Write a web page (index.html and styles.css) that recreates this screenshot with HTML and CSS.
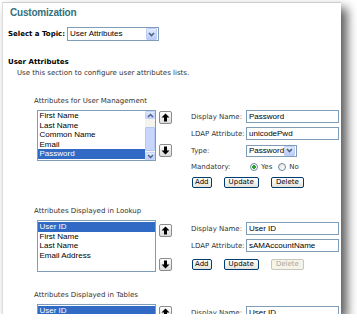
FILE: index.html
```html
<!DOCTYPE html>
<html lang="en">
<head>
  <meta charset="UTF-8">
  <meta name="viewport" content="width=device-width, initial-scale=1.0">
  <title>Customization</title>
  <link rel="stylesheet" href="styles.css">
</head>
<body>
  <div class="window">
    <h1 class="page-title">Customization</h1>

    <!-- Topic picker -->
    <div class="topic-row">
      <span class="topic-label">Select a Topic:</span>
      <div class="dropdown dropdown-topic">
        <span class="dropdown-text">User Attributes</span>
        <span class="dropdown-arrow"><svg width="7" height="5" viewBox="0 0 7 5"><polyline points="1,1 3.5,3.5 6,1" fill="none" stroke="#4d6185" stroke-width="1.6"/></svg></span>
      </div>
    </div>

    <h2 class="section-title">User Attributes</h2>
    <p class="section-desc">Use this section to configure user attributes lists.</p>

    <!-- User Management -->
    <div class="group group-manage">
      <div class="group-label">Attributes for User Management</div>
      <div class="group-body">
        <div class="listbox listbox-scroll">
          <ul class="list-items">
            <li>First Name</li>
            <li>Last Name</li>
            <li>Common Name</li>
            <li>Email</li>
            <li class="selected">Password</li>
          </ul>
          <div class="scrollbar">
            <span class="scroll-btn"><svg width="7" height="5" viewBox="0 0 7 5"><polyline points="1,4 3.5,1.5 6,4" fill="none" stroke="#4d6185" stroke-width="1.4"/></svg></span>
            <span class="scroll-track"><span class="scroll-thumb"></span></span>
            <span class="scroll-btn"><svg width="7" height="5" viewBox="0 0 7 5"><polyline points="1,1 3.5,3.5 6,1" fill="none" stroke="#4d6185" stroke-width="1.4"/></svg></span>
          </div>
        </div>
        <div class="movers">
          <button class="move-btn"><svg width="9" height="9" viewBox="0 0 9 9"><path d="M4.5 0.5 L8.5 4.5 H6 V8.5 H3 V4.5 H0.5 Z" fill="#000"/></svg></button>
          <button class="move-btn"><svg width="9" height="9" viewBox="0 0 9 9"><path d="M4.5 8.5 L8.5 4.5 H6 V0.5 H3 V4.5 H0.5 Z" fill="#000"/></svg></button>
        </div>
        <div class="attr-form">
          <div class="form-row">
            <span class="form-label">Display Name:</span>
            <input class="text-input" type="text" value="Password">
          </div>
          <div class="form-row">
            <span class="form-label">LDAP Attribute:</span>
            <input class="text-input" type="text" value="unicodePwd">
          </div>
          <div class="form-row">
            <span class="form-label">Type:</span>
            <div class="dropdown dropdown-type">
              <span class="dropdown-text">Password</span>
              <span class="dropdown-arrow"><svg width="7" height="5" viewBox="0 0 7 5"><polyline points="1,1 3.5,3.5 6,1" fill="none" stroke="#4d6185" stroke-width="1.6"/></svg></span>
            </div>
          </div>
          <div class="form-row">
            <span class="form-label">Mandatory:</span>
            <span class="radio radio-checked"></span><span class="radio-text">Yes</span>
            <span class="radio"></span><span class="radio-text">No</span>
          </div>
          <div class="form-buttons">
            <button class="btn btn-add">Add</button>
            <button class="btn">Update</button>
            <button class="btn">Delete</button>
          </div>
        </div>
      </div>
    </div>

    <!-- Lookup -->
    <div class="group group-lookup">
      <div class="group-label">Attributes Displayed in Lookup</div>
      <div class="group-body">
        <div class="listbox">
          <ul class="list-items">
            <li class="selected">User ID</li>
            <li>First Name</li>
            <li>Last Name</li>
            <li>Email Address</li>
          </ul>
        </div>
        <div class="movers">
          <button class="move-btn"><svg width="9" height="9" viewBox="0 0 9 9"><path d="M4.5 0.5 L8.5 4.5 H6 V8.5 H3 V4.5 H0.5 Z" fill="#000"/></svg></button>
          <button class="move-btn"><svg width="9" height="9" viewBox="0 0 9 9"><path d="M4.5 8.5 L8.5 4.5 H6 V0.5 H3 V4.5 H0.5 Z" fill="#000"/></svg></button>
        </div>
        <div class="attr-form">
          <div class="form-row">
            <span class="form-label">Display Name:</span>
            <input class="text-input" type="text" value="User ID">
          </div>
          <div class="form-row">
            <span class="form-label">LDAP Attribute:</span>
            <input class="text-input" type="text" value="sAMAccountName">
          </div>
          <div class="form-buttons">
            <button class="btn btn-add">Add</button>
            <button class="btn">Update</button>
            <button class="btn" disabled>Delete</button>
          </div>
        </div>
      </div>
    </div>

    <!-- Tables -->
    <div class="group group-tables">
      <div class="group-label">Attributes Displayed in Tables</div>
      <div class="group-body">
        <div class="listbox">
          <ul class="list-items">
            <li class="selected">User ID</li>
          </ul>
        </div>
        <div class="movers">
          <button class="move-btn"><svg width="9" height="9" viewBox="0 0 9 9"><path d="M4.5 0.5 L8.5 4.5 H6 V8.5 H3 V4.5 H0.5 Z" fill="#000"/></svg></button>
        </div>
        <div class="attr-form">
          <div class="form-row">
            <span class="form-label">Display Name:</span>
            <input class="text-input" type="text" value="User ID">
          </div>
        </div>
      </div>
    </div>
  </div>
</body>
</html>
```

FILE: styles.css
```css
/* General Styles */
body {
  margin: 0;
  background: #fff;
  font-family: "DejaVu Sans", Verdana, sans-serif;
  font-size: 7px;
  color: #333;
}

/* Window */
.window {
  margin: 2px 0 0 2px;
  width: 339px;
  height: 312px;
  box-sizing: border-box;
  padding-left: 5px;
  border-top: 1px solid #cfcfcf;
  border-left: 1px solid #dcdcdc;
  background: #fff;
  overflow: hidden;
  box-shadow: 6px 6px 10px rgba(0, 0, 0, 0.65);
}

.page-title {
  margin: 3px 0 0 2px;
  font-family: "Liberation Sans", Arial, sans-serif;
  font-size: 10px;
  font-weight: bold;
  line-height: 14px;
  letter-spacing: -0.2px;
  color: #33707c;
}

/* Topic */
.topic-row {
  display: flex;
  align-items: center;
  gap: 2px;
  height: 14px;
  margin-top: 7px;
}

.topic-label {
  font-weight: bold;
  color: #000;
}

.dropdown {
  display: flex;
  align-items: stretch;
  box-sizing: border-box;
  border: 1px solid #7f9db9;
  background: #fff;
}

.dropdown-topic {
  width: 92px;
  height: 14px;
}

.dropdown-type {
  width: 51px;
  height: 12px;
}

.dropdown-text {
  flex: 1;
  padding-left: 2px;
  font-family: "Liberation Sans", Arial, sans-serif;
  font-size: 8px;
  line-height: 11px;
  color: #000;
  white-space: nowrap;
}

.dropdown-type .dropdown-text {
  line-height: 10px;
}

.dropdown-arrow {
  width: 11px;
  flex: none;
  margin-right: 1px;
  box-sizing: border-box;
  border: 1px solid #bccdf8;
  border-radius: 1px;
  background: linear-gradient(#e3ebfe, #b9cbf6);
  display: flex;
  justify-content: center;
  align-items: center;
}

.section-title {
  margin: 16px 0 0;
  font-size: 7px;
  font-weight: bold;
  line-height: 10px;
  color: #000;
}

.section-desc {
  margin: 1px 0 0 9px;
  line-height: 10px;
}

/* Attribute groups */
.group {
  margin-top: 18px;
  padding-left: 26px;
}

.group-label {
  line-height: 10px;
}

.group-body {
  display: flex;
  align-items: flex-start;
  margin-top: 4px;
  padding-left: 3px;
}

.listbox {
  display: flex;
  width: 119px;
  height: 52px;
  box-sizing: border-box;
  border: 1px solid #7f9db9;
  background: #fff;
  flex: none;
}

.group-manage .listbox {
  height: 51px;
}

.list-items {
  flex: 1;
  margin: 0;
  padding: 1px 0 0;
  list-style: none;
  font-family: "Liberation Sans", Arial, sans-serif;
  font-size: 8px;
  line-height: 9.6px;
  color: #000;
}

.listbox-scroll .list-items {
  padding-top: 0;
}

.list-items li {
  padding-left: 1.5px;
  white-space: nowrap;
}

.list-items li.selected {
  background: #316ac5;
  color: #fff;
}

.scrollbar {
  width: 10px;
  display: flex;
  flex-direction: column;
  background: #f4f3ee;
}

.scroll-btn {
  height: 8px;
  box-sizing: border-box;
  border: 1px solid #c3d3fd;
  border-radius: 1px;
  background: linear-gradient(#e1e9fe, #bcccf8);
  display: flex;
  justify-content: center;
  align-items: center;
}

.scroll-track {
  flex: 1;
  display: flex;
  flex-direction: column;
  justify-content: flex-end;
  padding-bottom: 1px;
}

.scroll-thumb {
  height: 24px;
  box-sizing: border-box;
  border: 1px solid #b4c8f6;
  border-radius: 1px;
  background: #c8d6fc;
}

.movers {
  display: flex;
  flex-direction: column;
  justify-content: space-between;
  height: 47px;
  margin: 2px 0 0 3px;
}

.group-manage .movers {
  margin-top: 1px;
  height: 46px;
}

.group-lookup .movers {
  margin-top: 4px;
}

.move-btn {
  width: 13px;
  height: 13px;
  padding: 0;
  box-sizing: border-box;
  border: 1px solid #8c8c8c;
  border-radius: 2px;
  background: linear-gradient(#fdfdfd, #dcdcdc);
  display: flex;
  justify-content: center;
  align-items: center;
}

/* Form */
.attr-form {
  display: flex;
  flex-direction: column;
  gap: 4.3px;
  margin: 2px 0 0 19px;
}

.group-manage .attr-form {
  margin-top: 0;
}

.form-row {
  display: flex;
  align-items: center;
  min-height: 12px;
}

.form-label {
  width: 55px;
  flex: none;
  white-space: nowrap;
}

.text-input {
  width: 93px;
  height: 13px;
  margin: 0;
  padding: 0 2px;
  box-sizing: border-box;
  border: 1px solid #7f9db9;
  font-family: "Liberation Sans", Arial, sans-serif;
  font-size: 8px;
  color: #000;
  outline: none;
}

.radio {
  width: 8px;
  height: 8px;
  margin: 0 3px 0 4px;
  box-sizing: border-box;
  border: 1px solid #6d8aa8;
  border-radius: 50%;
  background: linear-gradient(135deg, #e4e4dc, #fff);
}

.radio-checked {
  background: radial-gradient(circle, #2aa32a 0, #2aa32a 1.6px, #fff 2px);
}

.radio-text {
  margin-right: 2px;
}

.form-buttons {
  display: flex;
  gap: 12px;
  margin-left: 1px;
}

.group-lookup .form-buttons {
  margin-top: 2px;
}

.btn {
  height: 11px;
  padding: 0 4px;
  box-sizing: border-box;
  border: 1px solid #003c74;
  border-radius: 2px;
  background: linear-gradient(#ffffff, #e6e4da);
  font-family: "DejaVu Sans", Verdana, sans-serif;
  font-size: 7px;
  line-height: 9px;
  color: #000;
}

.btn-add {
  padding: 0 2px;
}

.btn:disabled {
  border-color: #c9c7ba;
  background: #f5f4ea;
  color: #aca899;
}
```
